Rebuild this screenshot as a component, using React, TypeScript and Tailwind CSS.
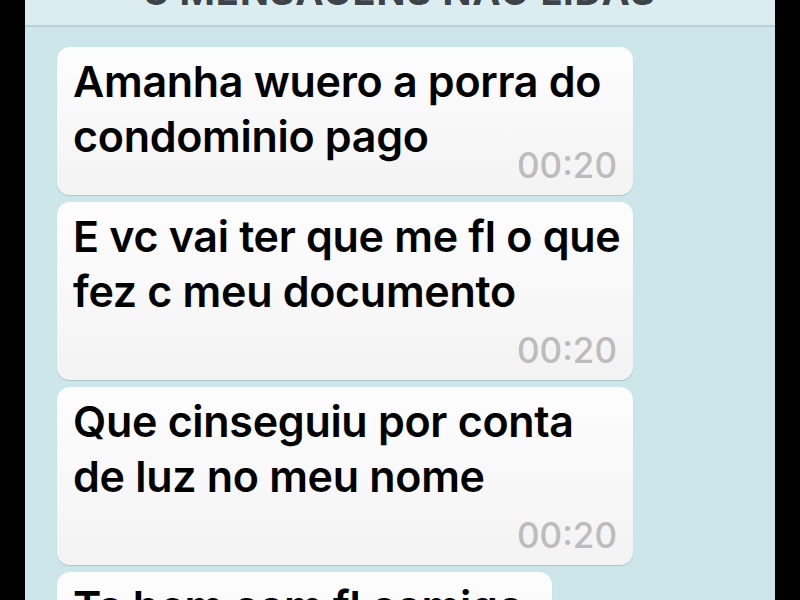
import React from "react";

type Msg = { text: string[]; time: string; inlineTime: boolean; width: string };

const messages: Msg[] = [
  { text: ["Amanha wuero a porra do", "condominio pago"], time: "00:20", inlineTime: true, width: "w-[576px]" },
  { text: ["E vc vai ter que me fl o que", "fez c meu documento"], time: "00:20", inlineTime: false, width: "w-[576px]" },
  { text: ["Que cinseguiu por conta", "de luz no meu nome"], time: "00:20", inlineTime: false, width: "w-[576px]" },
  { text: ["Ta bem com fl comigo"], time: "00:20", inlineTime: false, width: "w-[495px]" },
];

const font = { fontFamily: "Inter, 'Noto Sans', 'Liberation Sans', sans-serif" };

function Bubble({ m }: { m: Msg }) {
  return (
    <div
      className={
        m.width +
        " rounded-[13px] bg-gradient-to-b from-[#fdfdfd] to-[#f3f3f3] shadow-[0_1px_1px_rgba(60,100,110,0.25)] pl-[16px] pr-[16px] pt-[7px] shrink-0"
      }
    >
      <div className="text-[43px] leading-[55px] font-semibold text-black tracking-[-0.3px] whitespace-nowrap">
        {m.text.map((line, i) => (
          <div key={i}>{line}</div>
        ))}
      </div>
      <div
        className={
          "text-right text-[35px] leading-[40px] font-medium text-[#bcbcbc] pb-[10px] " +
          (m.inlineTime ? "-mt-[19px]" : "mt-[11px]")
        }
      >
        {m.time}
      </div>
    </div>
  );
}

export default function App() {
  return (
    <div className="w-[800px] h-[600px] bg-black flex justify-center overflow-hidden" style={font}>
      <div className="w-[750px] h-full flex flex-col bg-[#cce6ea] overflow-hidden">
        <div className="h-[27px] shrink-0 bg-[#dcedf1] border-b-2 border-[#b7d2d7] overflow-hidden">
          <div className="-mt-[29px] text-center text-[38px] leading-[40px] font-bold text-[#3d4349] tracking-[1px]">
            3 MENSAGENS NÃO LIDAS
          </div>
        </div>
        <div className="flex flex-col items-start gap-[7px] pl-[32px] pt-[20px]">
          {messages.map((m, i) => (
            <Bubble key={i} m={m} />
          ))}
        </div>
      </div>
    </div>
  );
}
